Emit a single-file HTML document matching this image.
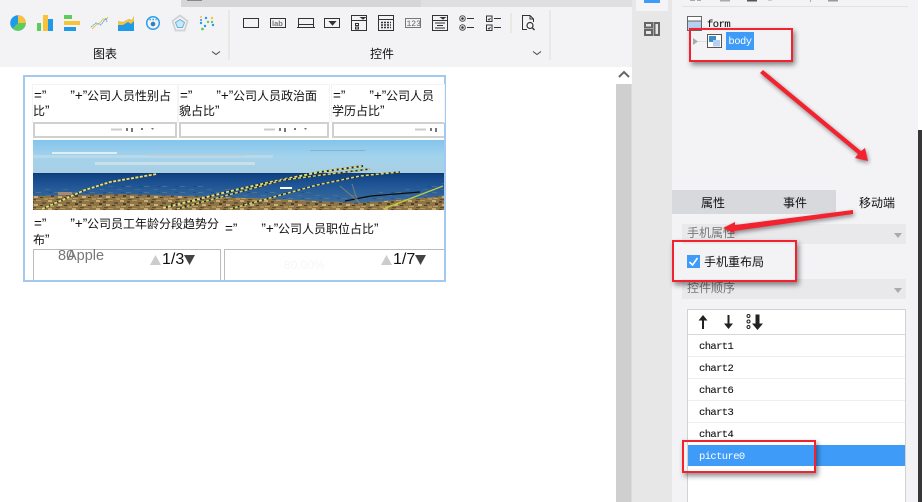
<!DOCTYPE html>
<html><head><meta charset="utf-8"><style>
html,body{margin:0;padding:0;width:922px;height:502px;overflow:hidden;background:#fff}
body{position:relative;font-family:"Liberation Sans","WenQuanYi Zen Hei","Noto Sans CJK SC",sans-serif;font-size:12px;color:#111}
.a{position:absolute}
.t{position:absolute;white-space:nowrap;line-height:16px}
.cn{font-family:"WenQuanYi Zen Hei","Noto Sans CJK SC",sans-serif}
.cell{position:absolute;background:#fff;font-size:12px;line-height:14.5px;font-family:"WenQuanYi Zen Hei","Noto Sans CJK SC",sans-serif;color:#111;white-space:pre;box-sizing:border-box}
.l{display:inline-block;width:53px;margin-left:1px;font:13.5px/14px "Liberation Sans",sans-serif;white-space:pre}
.l span{margin-left:24px}
.q{font:13.5px/14px "Liberation Sans",sans-serif}
.bx{position:absolute;background:#fff;border:1px solid #c4c4c4;box-sizing:border-box}
.tb{border:2px solid #d0d0d0}
.row{position:absolute;left:688px;width:217px;height:21px;border-bottom:1px solid #eee;font:10.5px/24px "Liberation Mono",monospace;letter-spacing:-.6px;color:#111;-webkit-text-stroke:.1px #111}
.row span{position:absolute;left:11px;top:0}
.red{position:absolute;border:2px solid #f3222f;box-sizing:border-box;box-shadow:2px 3px 5px rgba(0,0,0,.45)}
.sec{position:absolute;left:682px;width:224px;height:20px;background:#e9e9ec;color:#777;font-size:12px;line-height:17px}
.sec i{position:absolute;right:4px;top:9px;border:4px solid transparent;border-top:5px solid #aaa;border-bottom:0}
</style></head><body>
<!-- toolbar -->
<div class="a" style="left:0;top:0;width:632px;height:67px;background:#f3f3f6"></div>
<div class="a" style="left:181px;top:0;width:451px;height:7px;background:#dfdfe2"></div>
<div class="a" style="left:181px;top:0;width:240px;height:7px;background:#d6d6d9"></div>
<div class="a" style="left:187px;top:0;width:15px;height:1px;background:#888"></div>
<svg class="a" style="left:0;top:0" width="632" height="67" fill="none">
<!-- chart icons -->
<circle cx="18" cy="23" r="7.800" fill="#1f9ae8"/><path d="M18 23V15.200A7.800 7.800 0 0 1 25.800 23Z" fill="#f8c23a"/><path d="M18 23H25.800A7.800 7.800 0 0 1 12.500 28.500Z" fill="#5ccc5c"/>
<rect x="37" y="23" width="4" height="8" fill="#5ccc5c"/><rect x="43" y="15" width="5" height="16" fill="#f8c23a"/><rect x="48" y="19" width="5" height="12" fill="#1f9ae8"/>
<rect x="64" y="15" width="8" height="4" fill="#5ccc5c"/><rect x="64" y="21" width="16" height="4" fill="#f8c23a"/><rect x="64" y="27" width="12" height="4" fill="#1f9ae8"/>
<path d="M92 29l5-5 3-1 3-4 3 1 2-3" stroke="#f8c23a" stroke-width="1"/><path d="M91 27l5-4 5 2 5-7 1 4" stroke="#5ab0ea" stroke-width="1" stroke-dasharray="2 .6"/>
<path d="M118 31V21l5 1 6-3 3 1 2-4V31Z" fill="#1f9ae8"/><path d="M118 25V21l5 1 6-3 3 1 2-4v5l-3 3-3-2-5 3-2 0Z" fill="#f8c23a"/>
<circle cx="153" cy="23" r="6.300" stroke="#2aa0ea" stroke-width="1.500"/><circle cx="153" cy="24" r="2.300" fill="#2d7fc0"/><path d="M149.500 19.500h7" stroke="#2aa0ea" stroke-width="1.500" stroke-dasharray="1.500 1.500"/>
<path d="M180 15.500l7.500 5.500-3 9.500h-9l-3-9.500Z" stroke="#d2d2d2" stroke-width="1.800"/><path d="M180 19.500l4.500 3-2 5h-5l-2-5Z" stroke="#5bb5e8" fill="#cfe6f5"/>
<g fill="#1f9ae8"><circle cx="201" cy="23" r="1.200"/><circle cx="206" cy="18" r="1.200"/><circle cx="205" cy="26" r="1.200"/><circle cx="213" cy="25" r="1.200"/><circle cx="201" cy="20" r="1"/></g>
<g fill="#f8c23a"><circle cx="212" cy="18" r="1.200"/><circle cx="201" cy="17" r="1"/></g>
<g fill="#5ccc5c"><circle cx="208" cy="22" r="1.200"/><circle cx="212" cy="22" r="1.200"/><circle cx="202.500" cy="29" r="1.400"/></g>
<path d="M212 51.500l4 3 4-3" stroke="#444" stroke-width="1"/>
<path d="M533 51.500l4 3 4-3" stroke="#444" stroke-width="1"/>
<rect x="228" y="10" width="2" height="50" fill="#e9e8e2"/>
<rect x="549" y="10" width="2" height="50" fill="#e9e8e2"/>
<rect x="510" y="13" width="2" height="20" fill="#e9e8e2"/>
<!-- control icons -->
<g stroke="#333" stroke-width="1">
<rect x="243.500" y="18.500" width="15" height="9"/>
<rect x="270.500" y="18.500" width="15" height="9"/>
<path d="M298.500 27.500V18.500H313.500V27.500M298.500 24.500H313.500M297 27.500H315"/>
<rect x="324.500" y="18.500" width="15" height="9"/>
<path d="M329.500 21.500h6l-3 3.500Z" fill="#333"/>
<rect x="351.500" y="15.500" width="15" height="15"/><path d="M351.500 20.500H366.500M355.500 23.500h3v2h-3ZM355.500 27h3v2h-3Z"/><path d="M361 17.500h4l-2 1.500Z" fill="#333"/>
<rect x="378.500" y="15.500" width="15" height="15"/><path d="M378.500 19.500H393.500"/>
<path d="M381 22.500H391M381 25H391M381 27.500H391" stroke-dasharray="2 1" stroke-width="1.500"/>
<rect x="405.500" y="18.500" width="15" height="9" stroke="#777"/>
<rect x="432.500" y="15.500" width="15" height="15"/><path d="M432.500 20.500H447.500M435 23h10M437 25.500h6M435 28h10"/><path d="M441 17.500h4l-2 1.500Z" fill="#333"/>
<circle cx="462.500" cy="18.500" r="2.800" stroke="#555"/><circle cx="462.500" cy="27.500" r="2.800" stroke="#555"/><path d="M467 18.500H474M467 27.500H474"/>
<rect x="486.500" y="16" width="5.500" height="5.500"/><rect x="486.500" y="25" width="5.500" height="5.500"/><path d="M494 18.500H501M494 27.500H501M488 19l1 1 1.500-2M488 28l1 1 1.500-2"/>
<path d="M522.500 30V15.500H530L533.500 19V22M522.500 29.500H527M530 15.500V19H533.500"/>
<circle cx="530" cy="25.500" r="3" stroke-width="1.200"/><path d="M532.500 28l2 2" stroke-width="1.500"/>
</g>
<circle cx="462.500" cy="18.500" r="1.300" fill="#333"/><circle cx="462.500" cy="27.500" r="1.300" fill="#333"/>
<text x="272" y="26" font-family="Liberation Sans" font-size="7.500" font-weight="bold" fill="#777">lab</text>
<text x="406.500" y="26" font-family="Liberation Mono" font-size="8" fill="#666">123</text>
</svg>
<div class="t cn" style="left:93px;top:46px;font-size:12px">图表</div>
<div class="t cn" style="left:370px;top:46px;font-size:12px">控件</div>

<!-- scrollbar -->
<div class="a" style="left:616px;top:84px;width:16px;height:418px;background:#cfcfcf"></div>
<div class="a" style="left:631px;top:84px;width:1px;height:418px;background:#dcdcd4"></div>
<svg class="a" style="left:616px;top:68px" width="16" height="16"><path d="M3 9l5-5 5 5" fill="none" stroke="#666" stroke-width="2"/></svg>

<!-- side column -->
<div class="a" style="left:632px;top:0;width:40px;height:502px;background:#e7e7e7"></div>
<div class="a" style="left:636px;top:0;width:32px;height:11px;background:#f4f4f7"></div>
<div class="a" style="left:644px;top:0;width:16px;height:3px;background:#3f9bf8"></div>
<svg class="a" style="left:644px;top:22px" width="16" height="14" fill="#e7e7e7" stroke="#666" stroke-width="2"><rect x="1" y="1" width="7" height="4.500"/><rect x="1" y="8" width="7" height="5"/><rect x="10.500" y="1" width="4.500" height="12"/></svg>

<!-- right panel -->
<div class="a" style="left:672px;top:0;width:246px;height:502px;background:#f3f3f6"></div>
<div class="a" style="left:918px;top:130px;width:4px;height:372px;background:#363636"></div>
<div class="a" style="left:682px;top:6px;width:226px;height:1px;background:#e2e2e5"></div>
<svg class="a" style="left:680px;top:0" width="220" height="2" fill="#aaa"><rect x="10" width="5" height="1"/><rect x="17" width="4" height="1"/><rect x="40" width="10" height="1.500"/><rect x="67" width="10" height="1.500" fill="#555"/><rect x="88" width="4" height="1" fill="#ccc"/><rect x="130" width="1" height="2"/><rect x="148" width="10" height="1.500" fill="#999"/></svg>
<svg class="a" style="left:687px;top:16px" width="16" height="15"><rect x=".5" y=".5" width="14" height="14" fill="#b8d0ef" stroke="#666"/><rect x="1" y="1" width="13" height="3.500" fill="#fff"/><path d="M1 5H14" stroke="#666"/></svg>
<div class="t" style="left:707px;top:17px;font:10.500px/16px 'Liberation Mono',monospace;letter-spacing:-.5px;-webkit-text-stroke:.1px #111">form</div>
<svg class="a" style="left:692px;top:34px" width="30" height="15"><path d="M1 4l5 3.500-5 3.500Z" fill="#aaa"/><path d="M6 7.500h9" stroke="#ddd"/><rect x="15.500" y=".5" width="14" height="13" fill="#fff" stroke="#555"/><rect x="17" y="2" width="7" height="6" fill="#3a8fcb"/><rect x="21" y="6" width="7" height="6.500" fill="#b8d0ef"/></svg>
<div class="t" style="left:726px;top:32px;width:28px;height:18px;background:#3f9bf8;color:#fff;font:10.500px/21px 'Liberation Mono',monospace;letter-spacing:-.5px;text-align:center">body</div>

<!-- tabs -->
<div class="a" style="left:672px;top:190px;width:164px;height:24px;background:#d8d9dd"></div>
<div class="a" style="left:836px;top:190px;width:82px;height:24px;background:#f3f3f6"></div>
<div class="t cn" style="left:701px;top:195px">属性</div>
<div class="t cn" style="left:783px;top:195px">事件</div>
<div class="t cn" style="left:859px;top:195px">移动端</div>
<div class="sec cn" style="top:224px"><span style="position:absolute;left:5px;top:0">手机属性</span><i></i></div>
<div class="a" style="left:687px;top:255px;width:13px;height:13px;background:#3f9bf8"></div>
<svg class="a" style="left:687px;top:255px" width="13" height="13"><path d="M2.500 7l3 3 5-7" fill="none" stroke="#fff" stroke-width="1.600"/></svg>
<div class="t cn" style="left:704px;top:254px">手机重布局</div>
<div class="sec cn" style="top:279px"><span style="position:absolute;left:5px;top:0">控件顺序</span><i></i></div>

<!-- list -->
<div class="a" style="left:687px;top:309px;width:219px;height:193px;background:#fff;border:1px solid #d2d2d2;border-bottom:0;box-sizing:border-box"></div>
<div class="a" style="left:688px;top:334px;width:217px;height:1px;background:#d8d8d8"></div>
<svg class="a" style="left:695px;top:312px" width="70" height="20" fill="#222"><path d="M8 3l4.500 5.500H9V17H7V8.500H3.500Z"/><path d="M33.500 17L29 11.500H32.500V3H34.500V11.500H38Z"/><path d="M62.500 18L57 11.500H60.500V2.500H64.500V11.500H68Z"/><g fill="none" stroke="#222"><circle cx="53.500" cy="4" r="1.500"/><circle cx="53.500" cy="9.500" r="1.500"/><circle cx="53.500" cy="15" r="1.500"/></g></svg>
<div class="row" style="top:335px"><span>chart1</span></div>
<div class="row" style="top:357px"><span>chart2</span></div>
<div class="row" style="top:379px"><span>chart6</span></div>
<div class="row" style="top:401px"><span>chart3</span></div>
<div class="row" style="top:423px;border:0"><span>chart4</span></div>
<div class="row" style="top:445px;background:#3f9bf8;color:#fff;border:0;-webkit-text-stroke:0"><span>picture0</span></div>

<!-- form canvas -->
<div class="a" style="left:23px;top:75px;width:423px;height:207px;border:2px solid #a3c9f3;box-sizing:border-box;background:#fff"></div>
<div class="cell" style="left:33px;top:85px;width:144px;height:37px;padding-top:3px;line-height:15px;box-shadow:0 0 0 1px #f4f4f4"><span class="l">=”<span>”+”</span></span>公司人员性别占
比<span class="q">”</span></div>
<div class="cell" style="left:179px;top:85px;width:150px;height:37px;padding-top:3px;line-height:15px;box-shadow:0 0 0 1px #f4f4f4"><span class="l">=”<span>”+”</span></span>公司人员政治面
貌占比<span class="q">”</span></div>
<div class="cell" style="left:332px;top:85px;width:112px;height:37px;padding-top:3px;line-height:15px;box-shadow:0 0 0 1px #f4f4f4"><span class="l">=”<span>”+”</span></span>公司人员
学历占比<span class="q">”</span></div>
<div class="bx tb" style="left:33px;top:122px;width:144px;height:16px"></div>
<div class="bx tb" style="left:179px;top:122px;width:150px;height:16px"></div>
<div class="bx tb" style="left:332px;top:122px;width:112px;height:16px;border-right:0"></div>
<svg class="a" style="left:33px;top:126px" width="411" height="10" fill="#777"><g><rect x="78" y="2.500" width="11" height="2" fill="#ccc"/><rect x="93" y="2" width="2" height="3"/><rect x="98" y="2" width="2" height="4"/><rect x="108" y="2" width="2" height="2"/><path d="M118 2h3l-1.500 2Z"/></g><g transform="translate(153 0)"><rect x="78" y="2.500" width="11" height="2" fill="#ccc"/><rect x="93" y="2" width="2" height="3"/><rect x="98" y="2" width="2" height="4"/><rect x="108" y="2" width="2" height="2"/><path d="M118 2h3l-1.500 2Z"/></g><g transform="translate(304 0)"><rect x="78" y="2.500" width="11" height="2" fill="#ccc"/><rect x="93" y="2" width="2" height="3"/><rect x="98" y="2" width="2" height="4"/><rect x="108" y="2" width="2" height="2"/><path d="M118 2h3l-1.500 2Z"/></g></svg>

<!-- picture -->
<svg class="a" style="left:33px;top:140px" width="411" height="70" viewBox="33 140 411 70">
<defs>
<linearGradient id="sky" x1="0" y1="0" x2="0" y2="1"><stop offset="0" stop-color="#84c4ec"/><stop offset=".5" stop-color="#a3d3ec"/><stop offset="1" stop-color="#a8cfe4"/></linearGradient>
<linearGradient id="sea" x1="0" y1="0" x2="0" y2="1"><stop offset="0" stop-color="#0e3f80"/><stop offset=".4" stop-color="#1f5596"/><stop offset="1" stop-color="#3a6e9e"/></linearGradient>
<pattern id="pb" width="24" height="8" patternUnits="userSpaceOnUse"><rect width="24" height="8" fill="#8f7546"/><rect x="0" y="0" width="4" height="2" fill="#c9aa72"/><rect x="7" y="1" width="3" height="2" fill="#5c4a2e"/><rect x="12" y="0" width="5" height="1" fill="#b8965c"/><rect x="18" y="2" width="4" height="2" fill="#64543a"/><rect x="3" y="3" width="3" height="2" fill="#4a3f2c"/><rect x="10" y="4" width="4" height="2" fill="#ccb07c"/><rect x="16" y="5" width="3" height="1" fill="#4a3f2c"/><rect x="20" y="6" width="4" height="2" fill="#ab8e58"/><rect x="1" y="6" width="5" height="1" fill="#b89c66"/><rect x="8" y="7" width="4" height="1" fill="#5c4e34"/></pattern>
<pattern id="mot" width="18" height="6" patternUnits="userSpaceOnUse"><rect x="0" y="0" width="5" height="1" fill="#8f8262" opacity=".45"/><rect x="9" y="3" width="5" height="1" fill="#7c7a6e" opacity=".4"/><rect x="13" y="0" width="3" height="1" fill="#0f3a70" opacity=".4"/></pattern>
</defs>
<rect x="33" y="140" width="411" height="34" fill="url(#sky)"/>
<rect x="33" y="155" width="240" height="3" fill="#c8dce6" opacity=".6"/>
<rect x="52" y="152" width="65" height="2" fill="#eef5f7" opacity=".8"/>
<rect x="95" y="162" width="160" height="3" fill="#d5e4e8" opacity=".75"/>
<rect x="150" y="154" width="95" height="2" fill="#b9c9d4" opacity=".6"/>
<rect x="310" y="150" width="55" height="1" fill="#7ea6c8" opacity=".7"/>
<rect x="33" y="173" width="411" height="30" fill="url(#sea)"/>
<rect x="33" y="173" width="411" height="1" fill="#10386e"/>
<path d="M33 189L120 186 200 186 300 192 360 195 444 183V204H33Z" fill="url(#mot)"/>
<path d="M33 196L120 194 250 198 360 203 444 196V210H33Z" fill="url(#pb)"/>
<rect x="58" y="192" width="14" height="3" fill="#a88a72"/>
<rect x="280" y="187" width="12" height="2" fill="#fff"/>
<g fill="none" stroke-linecap="butt">
<path d="M42 209L85 190 110 182 157 174" stroke="#2c3a2c" stroke-width="1.800"/>
<path d="M42 209L85 190 110 182 157 174" stroke="#e6de78" stroke-width="1.800" stroke-dasharray="3 1.500"/>
<path d="M163 208L235 190 280 180 320 172 363 166" stroke="#1c2a30" stroke-width="1.900"/>
<path d="M163 208L235 190 280 180 320 172 363 166" stroke="#e6de78" stroke-width="1.900" stroke-dasharray="3 2"/>
<path d="M177 209L283 180 330 174 370 169" stroke="#1c2a30" stroke-width="1.500"/>
<path d="M177 209L283 180 330 174 370 169" stroke="#d8d060" stroke-width="1.500" stroke-dasharray="3 2"/>
<path d="M230 209L317 185 360 176 400 172" stroke="#1c2a30" stroke-width="1.500"/>
<path d="M230 209L317 185 360 176 400 172" stroke="#e0d868" stroke-width="1.500" stroke-dasharray="3 2"/>
<path d="M383 209L443 186" stroke="#c0cc40" stroke-width="1.300"/>
<path d="M345 201L371 196 420 192" stroke="#0a0a0a" stroke-width="1.200"/>
<path d="M340 186l20 17M352 184l6 18" stroke="#8a8a70" stroke-width="1" opacity=".8"/>
</g>
</svg>

<!-- lower -->
<div class="cell" style="left:33px;top:214px;width:188px;height:35px;padding-top:2px;line-height:16px"><span class="l" style="line-height:16px">=”<span>”+”</span></span>公司员工年龄分段趋势分
布<span class="q">”</span></div>
<div class="cell" style="left:224px;top:222px;width:220px;height:26px"><span class="l" style="margin-left:1px">=”<span>”+”</span></span>公司人员职位占比<span class="q">”</span></div>
<div class="bx" style="left:33px;top:249px;width:188px;height:31px;border-color:#bcbcbc;border-width:1px 1px 0 1px"></div>
<div class="bx" style="left:224px;top:249px;width:220px;height:31px;border-color:#bcbcbc;border-width:1px 0 0 1px"></div>
<div class="t" style="left:58px;top:248px;font-size:14.500px;color:#777">80</div>
<div class="t" style="left:67px;top:248px;font-size:14.500px;color:#777">Apple</div>
<svg class="a" style="left:150px;top:255px" width="46" height="11"><path d="M0 10L5.500 0 11 10Z" fill="#ccc"/><path d="M34 0H45L39.500 10Z" fill="#444"/></svg>
<div class="t" style="left:162px;top:252px;font-size:16px">1/3</div>
<div class="t" style="left:284px;top:257px;font-size:12px;color:#f6f6f6">80.00%</div>
<svg class="a" style="left:381px;top:255px" width="46" height="11"><path d="M0 10L5.500 0 11 10Z" fill="#ccc"/><path d="M34 0H45L39.500 10Z" fill="#444"/></svg>
<div class="t" style="left:393px;top:252px;font-size:16px">1/7</div>

<!-- annotations -->
<div class="red" style="left:689px;top:28px;width:104px;height:34px"></div>
<div class="red" style="left:672px;top:240px;width:125px;height:42px"></div>
<div class="red" style="left:682px;top:440px;width:134px;height:33px"></div>
<svg class="a" style="left:0;top:0;pointer-events:none" width="922" height="502" fill="#f3222f">
<g style="filter:drop-shadow(1px 2px 2px rgba(0,0,0,.45))">
<path d="M760 73L763 70 861 151 865 148 868 161 855 158 858 154Z"/>
<path d="M853 210L853 214 734 231 735 233.500 723 228 735 222 735 225Z"/>
</g></svg>
</body></html>
